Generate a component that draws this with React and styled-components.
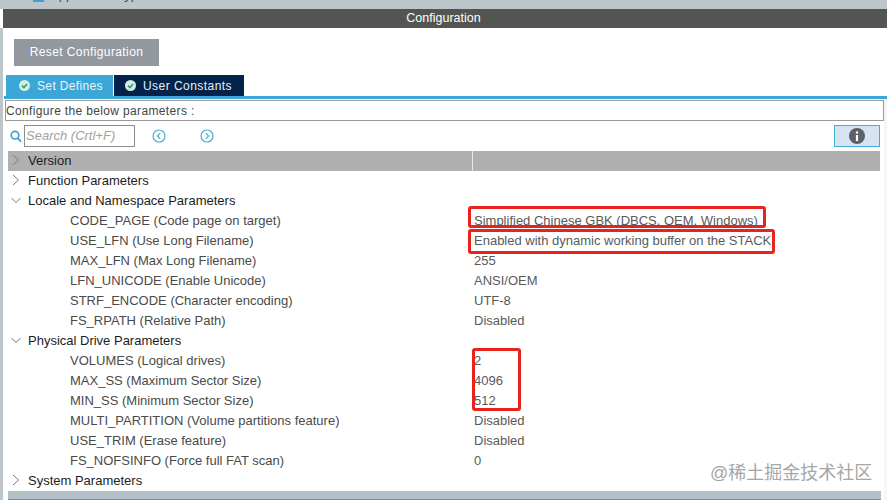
import React from 'react';
import styled, { createGlobalStyle } from 'styled-components';

const GlobalStyle = createGlobalStyle`
  html, body {
    margin: 0;
    padding: 0;
    background: #fff;
  }
  body {
    font-family: "Liberation Sans", Arial, sans-serif;
    overflow: hidden;
  }
`;

const Page = styled.div`
  position: relative;
  width: 887px;
  height: 500px;
  overflow: hidden;
  background: #fff;
  display: flex;
  flex-direction: column;
`;

const TopStrip = styled.div`
  height: 9px;
  background: #bcc6ca;
  display: flex;
  padding-left: 33px;
  overflow: hidden;
  flex: none;
`;

const TopIcon = styled.div`
  width: 11px;
  height: 2px;
  background: #3f9fd0;
`;

const TopText = styled.div`
  margin: -12px 0 0 6px;
  font-size: 13px;
  line-height: 14px;
  color: #444;
`;

const Header = styled.div`
  height: 19px;
  flex: none;
  margin-left: 3px;
  padding-right: 3px;
  background: #535553;
  color: #fff;
  font-size: 12.5px;
  line-height: 19px;
  text-align: center;
`;

const Body = styled.div`
  flex: 1;
  display: flex;
  flex-direction: column;
  margin-left: 3px;
  box-shadow: -3px 0 0 #bcc6ca;
  min-height: 0;
`;

const ResetButton = styled.div`
  width: 145px;
  height: 27px;
  margin: 11px 0 9px 11px;
  background: #92989e;
  color: #fff;
  font-size: 12px;
  letter-spacing: 0.4px;
  line-height: 27px;
  text-align: center;
  flex: none;
`;

const Tabs = styled.div`
  display: flex;
  gap: 1px;
  padding-left: 3px;
  height: 21px;
  flex: none;
`;

const Tab = styled.div`
  display: flex;
  align-items: center;
  gap: 7px;
  width: ${({ $width }) => $width}px;
  padding-left: ${({ $pad }) => $pad}px;
  box-sizing: border-box;
  background: ${({ $active }) => ($active ? '#3ca6d6' : '#03234b')};
  color: ${({ $active }) => ($active ? '#eaf5fb' : '#e8eef4')};
  font-size: 12px;
  letter-spacing: ${({ $active }) => ($active ? '0.35px' : '0.45px')};
`;

const TabRule = styled.div`
  height: 3px;
  background: #3ca6d6;
  margin-left: 1px;
  flex: none;
`;

const ConfigureBox = styled.div`
  height: 21px;
  margin: 1px 0 0 2px;
  width: 879px;
  box-sizing: border-box;
  border: 1px solid #9a9a9a;
  color: #444;
  font-size: 12px;
  letter-spacing: 0.35px;
  line-height: 20px;
  flex: none;
`;

const SearchRow = styled.div`
  display: flex;
  align-items: center;
  height: 22px;
  margin-top: 4px;
  padding-left: 7px;
  flex: none;
`;

const SearchInput = styled.div`
  width: 111px;
  height: 22px;
  box-sizing: border-box;
  margin-left: 2px;
  border: 1px solid #8c8c8c;
  color: #a2a2a2;
  font-size: 13px;
  font-style: italic;
  line-height: 20px;
  padding-left: 1px;
`;

const NavButton = styled.div`
  display: flex;
  margin-left: ${({ $gap }) => $gap}px;
`;

const InfoButton = styled.div`
  margin-left: auto;
  margin-right: 7px;
  width: 46px;
  height: 22px;
  box-sizing: border-box;
  border: 1px solid #45aed6;
  background: #d6e4f2;
  display: flex;
  align-items: center;
  justify-content: center;
`;

const Tree = styled.div`
  margin: 4px 7px 0 5px;
  flex: none;
`;

const Row = styled.div`
  display: flex;
  height: 20px;
  align-items: center;
  font-size: 13px;
  background: ${({ $head }) => ($head ? '#b0b0b0' : 'transparent')};
`;

const NameCell = styled.div`
  width: 464px;
  flex: none;
  height: 100%;
  display: flex;
  align-items: center;
  box-sizing: border-box;
  padding: 0 0 2px ${({ $indent }) => ($indent ? 62 : 3)}px;
  color: ${({ $indent }) => ($indent ? '#4a4a4a' : '#1c1c1c')};
`;

const ValueCell = styled.div`
  flex: 1;
  height: 100%;
  display: flex;
  align-items: center;
  box-sizing: border-box;
  padding: 0 0 2px 1px;
  color: #5a5a5a;
  border-left: ${({ $head }) => ($head ? '1px solid #e6e6e6' : '1px solid transparent')};
`;

const Chevron = styled.svg`
  width: 10px;
  height: 10px;
  margin-right: 7px;
  flex: none;
`;

const BottomBar = styled.div`
  position: absolute;
  left: 8px;
  right: 6px;
  top: 491px;
  height: 9px;
  background: #b2bfc6;
  border-bottom: 1px solid #7f8c94;
  box-sizing: border-box;
`;

const RightEdge = styled.div`
  position: absolute;
  top: 99px;
  right: 0;
  bottom: 0;
  width: 3px;
  background: #f4f5f6;
`;

const RedBox = styled.div`
  position: absolute;
  left: ${({ $x }) => $x}px;
  top: ${({ $y }) => $y}px;
  width: ${({ $w }) => $w}px;
  height: ${({ $h }) => $h}px;
  box-sizing: border-box;
  border: 3px solid #e8221c;
  border-radius: 3px;
`;

const Watermark = styled.div`
  position: absolute;
  left: 710px;
  top: 463px;
  color: #a6a6a6;
  font-size: 18px;
  line-height: 20px;
  white-space: nowrap;
  font-family: "Liberation Sans", "Noto Sans CJK SC", sans-serif;
`;

const CheckIcon = () => (
  <svg width="11" height="11" viewBox="0 0 11 11">
    <circle cx="5.5" cy="5.5" r="5.5" fill="#d4efe2" />
    <path d="M3 5.6 L4.9 7.5 L8 4" fill="none" stroke="#2d9e78" strokeWidth="1.6" />
  </svg>
);

const SearchIcon = () => (
  <svg width="12" height="13" viewBox="0 0 12 13">
    <circle cx="5" cy="5.2" r="3.8" fill="none" stroke="#3a9fd0" strokeWidth="1.6" />
    <path d="M7.8 8.2 L11 11.6" stroke="#3a9fd0" strokeWidth="1.8" />
  </svg>
);

const NavIcon = ({ dir }) => (
  <svg width="14" height="14" viewBox="0 0 14 14">
    <circle cx="7" cy="7" r="6" fill="none" stroke="#45aed6" strokeWidth="1.2" />
    <path
      d={dir === 'left' ? 'M8.2 4.2 L5.4 7 L8.2 9.8' : 'M5.8 4.2 L8.6 7 L5.8 9.8'}
      fill="none"
      stroke="#45aed6"
      strokeWidth="1.2"
    />
  </svg>
);

const InfoIcon = () => (
  <svg width="16" height="16" viewBox="0 0 16 16">
    <circle cx="8" cy="8" r="8" fill="#5b6166" />
    <rect x="6.9" y="7" width="2.2" height="6" fill="#fff" />
    <rect x="6.9" y="3.4" width="2.2" height="2.2" fill="#fff" />
  </svg>
);

const ChevronIcon = ({ open }) => (
  <Chevron viewBox="0 0 10 10">
    <path
      d={open ? 'M0.5 3 L5 7.5 L9.5 3' : 'M2 0 L7.5 5 L2 10'}
      fill="none"
      stroke="#777"
      strokeWidth="1"
    />
  </Chevron>
);

const rows = [
  { name: 'Version', head: true },
  { name: 'Function Parameters', group: true },
  { name: 'Locale and Namespace Parameters', group: true, open: true },
  { name: 'CODE_PAGE (Code page on target)', value: 'Simplified Chinese GBK (DBCS, OEM, Windows)' },
  { name: 'USE_LFN (Use Long Filename)', value: 'Enabled with dynamic working buffer on the STACK' },
  { name: 'MAX_LFN (Max Long Filename)', value: '255' },
  { name: 'LFN_UNICODE (Enable Unicode)', value: 'ANSI/OEM' },
  { name: 'STRF_ENCODE (Character encoding)', value: 'UTF-8' },
  { name: 'FS_RPATH (Relative Path)', value: 'Disabled' },
  { name: 'Physical Drive Parameters', group: true, open: true },
  { name: 'VOLUMES (Logical drives)', value: '2' },
  { name: 'MAX_SS (Maximum Sector Size)', value: '4096' },
  { name: 'MIN_SS (Minimum Sector Size)', value: '512' },
  { name: 'MULTI_PARTITION (Volume partitions feature)', value: 'Disabled' },
  { name: 'USE_TRIM (Erase feature)', value: 'Disabled' },
  { name: 'FS_NOFSINFO (Force full FAT scan)', value: '0' },
  { name: 'System Parameters', group: true },
];

export default function App() {
  return (
    <Page>
      <GlobalStyle />
      <TopStrip>
        <TopIcon />
        <TopText>Application Type</TopText>
      </TopStrip>
      <Header>Configuration</Header>
      <Body>
        <ResetButton>Reset Configuration</ResetButton>
        <Tabs>
          <Tab $active $width={107} $pad={13}>
            <CheckIcon />
            Set Defines
          </Tab>
          <Tab $width={130} $pad={11}>
            <CheckIcon />
            User Constants
          </Tab>
        </Tabs>
        <TabRule />
        <ConfigureBox>Configure the below parameters :</ConfigureBox>
        <SearchRow>
          <SearchIcon />
          <SearchInput>Search (Crtl+F)</SearchInput>
          <NavButton $gap={17}>
            <NavIcon dir="left" />
          </NavButton>
          <NavButton $gap={34}>
            <NavIcon dir="right" />
          </NavButton>
          <InfoButton>
            <InfoIcon />
          </InfoButton>
        </SearchRow>
        <Tree>
          {rows.map((r) => (
            <Row key={r.name} $head={r.head}>
              <NameCell $indent={!r.head && !r.group}>
                {(r.head || r.group) && <ChevronIcon open={r.open} />}
                {r.name}
              </NameCell>
              <ValueCell $head={r.head}>{r.value}</ValueCell>
            </Row>
          ))}
        </Tree>
      </Body>
      <RightEdge />
      <BottomBar />
      <RedBox $x={468} $y={206} $w={298} $h={22} />
      <RedBox $x={468} $y={229} $w={307} $h={25} />
      <RedBox $x={472} $y={348} $w={49} $h={63} />
      <Watermark>@稀土掘金技术社区</Watermark>
    </Page>
  );
}
